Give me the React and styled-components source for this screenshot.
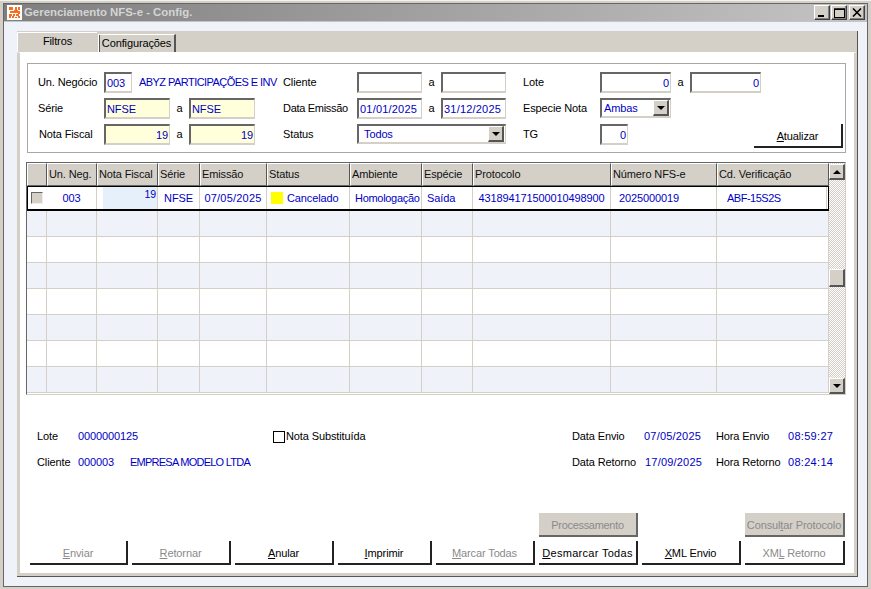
import React from 'react';
import styled, { createGlobalStyle } from 'styled-components';

const Global = createGlobalStyle`
  html, body { margin: 0; padding: 0; background: #d4d0c8; }
  * { box-sizing: border-box; }
  body { font-family: "Liberation Sans", Arial, sans-serif; font-size: 11px; letter-spacing: -0.12px; line-height: 13px; color: #000; }
`;

const BEIGE = '#d4d0c8';
const BLUE = '#0000c4';
const LAV = '#f0f2fa';

const Window = styled.div`
  width: 871px; height: 589px; display: flex; flex-direction: column;
  background: ${BEIGE}; padding: 3px 3px 2px 3px; overflow: hidden;
  box-shadow: inset 0 1px 0 #f4f2ec;
`;
const Inner = styled.div`
  flex: 1; min-height: 0; display: flex; flex-direction: column; border: 1px solid #666;
`;
const TitleBar = styled.div`
  height: 18px; display: flex; align-items: center; padding: 0 2px 0 3px;
  background: linear-gradient(90deg, #7f7f7f, #c4c4c4);
  border-bottom: 1px solid #c4c4c4;
`;
const TitleIcon = styled.svg`
  width: 15px; height: 15px; flex: none; margin-right: 2px;
`;
const TitleText = styled.div`
  flex: 1; color: #d4d4d4; font-weight: 700; font-size: 11.4px; letter-spacing: 0;
`;
const WinBtn = styled.div`
  width: 16px; height: 15px; background: ${BEIGE}; margin-left: ${p => p.$gap || 1}px;
  display: flex; align-items: center; justify-content: center;
  border-top: 1px solid #fff; border-left: 1px solid #fff;
  border-right: 1px solid #404040; border-bottom: 1px solid #404040;
  box-shadow: inset -1px -1px 0 #808080;
`;
const Body = styled.div`
  flex: 1; min-height: 0; display: flex; background: ${LAV}; padding: 9px 9px 9px 13px;
`;
const TabFrame = styled.div`
  flex: 1; min-width: 0; display: flex; flex-direction: column;
  border-right: 1px solid #555; border-bottom: 1px solid #555;
`;
const TabStrip = styled.div`
  height: 21px; flex: none; display: flex; align-items: flex-end; background: ${BEIGE};
  border-top: 1px solid ${BEIGE};
`;
const Tab = styled.div`
  display: flex; align-items: center; justify-content: center; background: ${BEIGE};
  width: ${p => p.$w}px; height: ${p => p.$active ? 20 : 18}px;
  padding-bottom: ${p => p.$active ? 3 : 0}px;
  margin-right: ${p => p.$active ? 1 : 0}px;
  border-left: 1px solid #fff;
  border-top: 1px solid #fff;
  border-right: ${p => p.$active ? 'none' : '2px solid #555'};
  box-shadow: ${p => p.$active ? 'none' : 'inset 1px 0 0 #555'};
`;
const Page = styled.div`
  flex: 1; min-height: 0; display: flex; flex-direction: column; background: #fff;
  border: 3px solid ${BEIGE}; border-top: 1px solid #fff; padding-top: 10px;
`;
const Filter = styled.div`
  margin-left: 7px; width: 819px; height: 90px; border: 1px solid #a8a8a8; flex: none;
  padding: 8px 0 0 10px; display: grid; align-items: center;
  grid-template-columns: 66px 66px 19px 66px 28px 74px 65px 19px 65px 17px 77px 71px 19px 71px 82px;
  grid-auto-rows: 21px; row-gap: 5px;
`;
const Lbl = styled.div`
  grid-column: ${p => p.$col}; white-space: nowrap;
  ${p => p.$nudge ? `padding-left:${p.$nudge}px;` : ''}
  ${p => p.$ls !== undefined ? `letter-spacing:${p.$ls}px;` : ''}
`;
const Sep = styled(Lbl)` text-align: center; `;
const Inset = styled.div`
  height: 21px; background: ${p => p.$bg || '#fff'}; color: ${BLUE};
  border-top: 2px solid #666; border-left: 2px solid #666;
  border-right: 1px solid ${BEIGE}; border-bottom: 2px solid ${BEIGE};
  display: flex; align-items: center; white-space: nowrap; overflow: hidden;
`;
const Field = styled(Inset)`
  grid-column: ${p => p.$col}; flex: none;
  width: ${p => p.$w ? p.$w + 'px' : 'auto'};
  justify-content: ${p => p.$right ? 'flex-end' : 'flex-start'};
  padding: 1px 1px 0;
  letter-spacing: ${p => p.$ls !== undefined ? p.$ls : -0.12}px;
`;
const NameWrap = styled.div`
  grid-column: ${p => p.$col}; display: flex; align-items: center; gap: 7px; overflow: hidden;
  width: 174px;
`;
const NameText = styled.div` color: ${BLUE}; white-space: nowrap; letter-spacing: -0.55px; `;
const Select = styled(Inset)`
  grid-column: ${p => p.$col}; padding-left: ${p => p.$pad}px; justify-content: space-between;
  padding-right: 1px; height: 20px; align-self: start;
`;
const Arrow = styled.div`
  width: 16px; height: 16px; flex: none; background: ${BEIGE};
  display: flex; align-items: center; justify-content: center;
  border-top: 1px solid #fff; border-left: 1px solid #fff;
  border-right: 2px solid #555; border-bottom: 2px solid #555;
`;
const Tri = styled.div`
  width: 0; height: 0; border-left: 4px solid transparent; border-right: 4px solid transparent;
  ${p => p.$up ? 'border-bottom: 4px solid #000;' : 'border-top: 4px solid #000;'}
`;
const Btn = styled.div`
  height: 24px; display: flex; align-items: center; justify-content: center; white-space: nowrap;
  grid-column: ${p => p.$col};
  width: ${p => p.$w ? p.$w + 'px' : 'auto'};
  justify-self: ${p => p.$w ? 'end' : 'stretch'};
  background: ${p => p.$fill ? BEIGE : '#fff'};
  color: ${p => p.$off ? '#8a8a8a' : '#000'};
  border-right: 2px solid ${p => p.$fill ? '#666' : '#222'};
  border-bottom: 2px solid ${p => p.$fill ? '#666' : '#222'};
  padding-top: 3px;
  ${p => p.$ls !== undefined ? `letter-spacing:${p.$ls}px;` : ''}
  u { text-decoration: underline; }
`;
const TopBtn = styled(Btn)` align-self: start; `;
const Frame = styled.div`
  margin: 9px 0 0 6px; width: 820px; height: 233px; flex: none; display: flex;
  border-top: 1px solid #666; border-left: 1px solid #666;
  border-right: 1px solid ${BEIGE}; border-bottom: 1px solid ${BEIGE};
`;
const TableArea = styled.div`
  width: 802px; flex: none; display: flex; flex-direction: column; overflow: hidden;
`;
const COLS = '20px 50px 61px 42px 67px 83px 72px 51px 138px 106px 112px';
const HeadRow = styled.div`
  display: grid; grid-template-columns: ${COLS}; height: 23px; flex: none;
`;
const HeadCell = styled.div`
  background: ${BEIGE}; display: flex; align-items: center; padding: 0 0 0 1px;
  border-top: 1px solid #fff; border-left: 1px solid #fff;
  border-right: 1px solid #555; border-bottom: 1px solid #666;
  overflow: hidden; white-space: nowrap; color: #111;
`;
const Row = styled.div`
  display: grid; grid-template-columns: ${COLS}; height: 26px; flex: none;
  background: ${p => p.$alt ? LAV : '#fff'};
`;
const SelRow = styled(Row)`
  height: 25px; background: #fff;
  border: 1px solid #000; border-bottom: 2px solid #000;
  grid-template-columns: 19px 50px 61px 42px 67px 83px 72px 51px 138px 106px 110px;
`;
const Cell = styled.div`
  border-right: 1px solid ${BEIGE}; border-bottom: 1px solid ${BEIGE};
`;
const DataCell = styled.div`
  border-right: 1px solid ${BEIGE}; color: ${BLUE}; display: flex; align-items: center;
  justify-content: ${p => p.$center ? 'center' : 'flex-start'};
  padding-left: ${p => p.$pad || 0}px; white-space: nowrap; overflow: hidden;
  ${p => p.$ls !== undefined ? `letter-spacing:${p.$ls}px;` : ''}
`;
const NumCell = styled.div`
  border-right: 1px solid ${BEIGE}; color: ${BLUE}; display: flex; justify-content: flex-end;
  align-items: flex-start; padding: 1px 1px 0 0; margin-left: 6px; background: #e6f0fb;
  font-size: 10.5px;
`;
const RowCheck = styled.div`
  width: 12px; height: 12px; margin: 5px 0 0 3px; background: ${BEIGE};
  border-top: 1px solid #666; border-left: 1px solid #666;
  border-right: 1px solid #eee; border-bottom: 1px solid #eee;
`;
const Swatch = styled.span`
  width: 12px; height: 12px; background: #ffff00; margin-right: 4px; flex: none;
`;
const Scroll = styled.div`
  width: 16px; padding-top: 1px; display: flex; flex-direction: column;
  background: repeating-conic-gradient(${BEIGE} 0 25%, #fff 0 50%) 0 0 / 2px 2px;
`;
const ScrollBtn = styled.div`
  width: 16px; height: 16px; flex: none; background: ${BEIGE};
  display: flex; align-items: center; justify-content: center;
  border-top: 1px solid #fff; border-left: 1px solid #fff;
  border-right: 2px solid #555; border-bottom: 2px solid #555;
`;
const Track = styled.div` flex: 1; padding-top: 89px; `;
const Thumb = styled(ScrollBtn)` height: 18px; `;
const Info = styled.div`
  margin: 28px 0 0 17px; display: grid;
  grid-template-columns: 41px 52px 143px 299px 72px 72px 72px 60px;
  grid-auto-rows: 26px; align-items: center; flex: none;
`;
const Val = styled(Lbl)` color: ${BLUE}; `;
const CheckLine = styled.div`
  grid-column: ${p => p.$col}; display: flex; align-items: center; gap: 1px; white-space: nowrap;
`;
const Box = styled.span`
  width: 12px; height: 12px; margin-top: 2px; border: 1px solid #000; background: #fff; flex: none;
`;
const Buttons = styled.div`
  margin-top: auto; padding: 0 0 8px 10px; display: grid; flex: none; gap: 4px;
  grid-template-columns: 98px 99px 99px 94px 99px 99px 99px 100px;
`;

const headers = ['', 'Un. Neg.', 'Nota Fiscal', 'Série', 'Emissão', 'Status', 'Ambiente', 'Espécie', 'Protocolo', 'Número NFS-e', 'Cd. Verificação'];
const blank = Array.from({ length: 7 }, (_, i) => i);
const WIDE = 0.2;

const Logo = () => (
  <TitleIcon viewBox="0 0 15 15">
    <rect width="15" height="15" fill="#fff" />
    <g fill="#f5701e">
      <rect x="2" y="2" width="4" height="3" /><rect x="8" y="2" width="2" height="3" /><rect x="11" y="2" width="2" height="3" />
      <rect x="3" y="6" width="4" height="2" /><rect x="7" y="5" width="4" height="3" /><rect x="11" y="6" width="2" height="3" />
      <rect x="2" y="9" width="3" height="2" /><rect x="6" y="9" width="2" height="2" /><rect x="9" y="9" width="3" height="2" />
      <rect x="2" y="11" width="2" height="2" /><rect x="5" y="11" width="2" height="2" /><rect x="8" y="12" width="2" height="1" /><rect x="11" y="11" width="2" height="2" />
    </g>
  </TitleIcon>
);

export default function App() {
  return (
    <>
      <Global />
      <Window>
        <Inner>
          <TitleBar>
            <Logo />
            <TitleText>Gerenciamento NFS-e - Config.</TitleText>
            <WinBtn>
              <svg width="10" height="10" viewBox="0 0 10 10"><rect x="1" y="7" width="6" height="2" fill="#000" /></svg>
            </WinBtn>
            <WinBtn>
              <svg width="11" height="10" viewBox="0 0 11 10"><rect x="0.5" y="1" width="10" height="8.5" fill="none" stroke="#000" /><rect x="0" y="0.5" width="11" height="1.5" fill="#000" /></svg>
            </WinBtn>
            <WinBtn $gap={2}>
              <svg width="10" height="9" viewBox="0 0 10 9"><path d="M1 0.5 L9 8.5 M9 0.5 L1 8.5" stroke="#000" strokeWidth="1.6" /></svg>
            </WinBtn>
          </TitleBar>
          <Body>
            <TabFrame>
              <TabStrip>
                <Tab $active $w={80}>Filtros</Tab>
                <Tab $w={78}>Configurações</Tab>
              </TabStrip>
              <Page>
                <Filter>
                  <Lbl $col={1}>Un. Negócio</Lbl>
                  <NameWrap $col="2 / 6"><Field $w={28}>003</Field><NameText>ABYZ PARTICIPAÇÕES E INV</NameText></NameWrap>
                  <Lbl $col={6}>Cliente</Lbl>
                  <Field $col={7} />
                  <Sep $col={8}>a</Sep>
                  <Field $col={9} />
                  <Lbl $col={11}>Lote</Lbl>
                  <Field $col={12} $right>0</Field>
                  <Sep $col={13}>a</Sep>
                  <Field $col={14} $right>0</Field>

                  <Lbl $col={1}>Série</Lbl>
                  <Field $col={2} $bg="#ffffdc">NFSE</Field>
                  <Sep $col={3}>a</Sep>
                  <Field $col={4} $bg="#ffffdc">NFSE</Field>
                  <Lbl $col={6} $ls={-0.3}>Data Emissão</Lbl>
                  <Field $col={7} $ls={WIDE}>01/01/2025</Field>
                  <Sep $col={8}>a</Sep>
                  <Field $col={9} $ls={WIDE}>31/12/2025</Field>
                  <Lbl $col={11}>Especie Nota</Lbl>
                  <Select $col={12} $pad={2}>Ambas<Arrow><Tri /></Arrow></Select>

                  <Lbl $col={1} $nudge={1}>Nota Fiscal</Lbl>
                  <Field $col={2} $bg="#ffffdc" $right>19</Field>
                  <Sep $col={3}>a</Sep>
                  <Field $col={4} $bg="#ffffdc" $right>19</Field>
                  <Lbl $col={6}>Status</Lbl>
                  <Select $col="7 / 10" $pad={5}>Todos<Arrow><Tri /></Arrow></Select>
                  <Lbl $col={11}>TG</Lbl>
                  <Field $col={12} $w={28} $right>0</Field>
                  <TopBtn $col="14 / 16" $w={89}><span><u>A</u>tualizar</span></TopBtn>
                </Filter>

                <Frame>
                  <TableArea>
                    <HeadRow>{headers.map((h, i) => <HeadCell key={i}>{h}</HeadCell>)}</HeadRow>
                    <SelRow>
                      <div><RowCheck /></div>
                      <DataCell $center>003</DataCell>
                      <NumCell>19</NumCell>
                      <DataCell $center>NFSE</DataCell>
                      <DataCell $center $ls={WIDE}>07/05/2025</DataCell>
                      <DataCell $pad={4}><Swatch />Cancelado</DataCell>
                      <DataCell $pad={5} $ls={-0.3}>Homologação</DataCell>
                      <DataCell $pad={5}>Saída</DataCell>
                      <DataCell $center>431894171500010498900</DataCell>
                      <DataCell $pad={8}>2025000019</DataCell>
                      <DataCell $pad={10} $ls={-0.5}>ABF-15S2S</DataCell>
                    </SelRow>
                    {blank.map(r => (
                      <Row key={r} $alt={r % 2 === 0}>
                        {headers.map((_, i) => <Cell key={i} />)}
                      </Row>
                    ))}
                  </TableArea>
                  <Scroll>
                    <ScrollBtn><Tri $up /></ScrollBtn>
                    <Track><Thumb /></Track>
                    <ScrollBtn><Tri /></ScrollBtn>
                  </Scroll>
                </Frame>

                <Info>
                  <Lbl $col={1}>Lote</Lbl>
                  <Val $col="2 / 4">0000000125</Val>
                  <CheckLine $col={4}><Box />Nota Substituída</CheckLine>
                  <Lbl $col={5}>Data Envio</Lbl>
                  <Val $col={6} $ls={WIDE}>07/05/2025</Val>
                  <Lbl $col={7}>Hora Envio</Lbl>
                  <Val $col={8} $ls={0.3}>08:59:27</Val>

                  <Lbl $col={1}>Cliente</Lbl>
                  <Val $col={2}>000003</Val>
                  <Val $col={3} $ls={-0.75}>EMPRESA MODELO LTDA</Val>
                  <Lbl $col={5}>Data Retorno</Lbl>
                  <Val $col={6} $nudge={1} $ls={WIDE}>17/09/2025</Val>
                  <Lbl $col={7}>Hora Retorno</Lbl>
                  <Val $col={8} $ls={0.3}>08:24:14</Val>
                </Info>

                <Buttons>
                  <Btn $col={6} $fill $off $ls={-0.3}>Processamento</Btn>
                  <Btn $col={8} $fill $off><span>Consul<u>t</u>ar Protocolo</span></Btn>
                  <Btn $col={1} $off><span><u>E</u>nviar</span></Btn>
                  <Btn $col={2} $off><span><u>R</u>etornar</span></Btn>
                  <Btn $col={3}><span><u>A</u>nular</span></Btn>
                  <Btn $col={4}><span><u>I</u>mprimir</span></Btn>
                  <Btn $col={5} $off><span><u>M</u>arcar Todas</span></Btn>
                  <Btn $col={6} $ls={0.3}><span><u>D</u>esmarcar Todas</span></Btn>
                  <Btn $col={7}><span><u>X</u>ML Envio</span></Btn>
                  <Btn $col={8} $off><span>XM<u>L</u> Retorno</span></Btn>
                </Buttons>
              </Page>
            </TabFrame>
          </Body>
        </Inner>
      </Window>
    </>
  );
}
